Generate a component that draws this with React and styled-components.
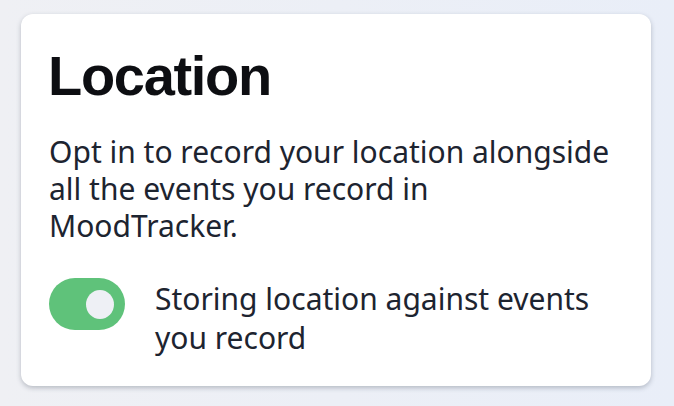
import React from "react";
import styled, { createGlobalStyle } from "styled-components";

const Global = createGlobalStyle`
  html, body { margin: 0; padding: 0; }
  body {
    width: 674px;
    height: 406px;
    overflow: hidden;
    background: linear-gradient(90deg, #eff0f4 0%, #e9eef8 100%);
    font-family: "Noto Sans", sans-serif;
  }
`;

const Page = styled.div`
  padding: 14px 23px 20px 21px;
`;

const Card = styled.section`
  background: #ffffff;
  border-radius: 12px;
  box-shadow: 0 2px 5px rgba(40, 50, 70, 0.28);
  padding: 30px 28px 22px 28px;
  height: 372px;
  box-sizing: border-box;
`;

const Title = styled.h1`
  margin: 0 0 0 -1px;
  font-family: "Liberation Sans", Arial, sans-serif;
  font-weight: 700;
  font-size: 56px;
  line-height: 64px;
  color: #0d0e12;
  letter-spacing: -1.3px;
`;

const Text = styled.p`
  margin: 25px 0 0;
  font-size: 30px;
  line-height: 37px;
  color: #1d2430;
`;

const Row = styled.div`
  display: flex;
  align-items: flex-start;
  gap: 30px;
  margin-top: 34px;
`;

const Toggle = styled.div`
  flex: none;
  width: 76px;
  height: 52px;
  border-radius: 26px;
  background: ${(p) => (p.$on ? "#5fc27a" : "#c9ced6")};
  display: flex;
  align-items: center;
  justify-content: ${(p) => (p.$on ? "flex-end" : "flex-start")};
  padding: 0 11px;
  box-sizing: border-box;
`;

const Knob = styled.span`
  width: 28px;
  height: 29px;
  border-radius: 50%;
  background: #eef0f5;
`;

const Label = styled.span`
  font-size: 30px;
  line-height: 39px;
  color: #1d2430;
  padding-top: 1px;
`;

export default function App() {
  return (
    <>
      <Global />
      <Page>
        <Card>
          <Title>Location</Title>
          <Text>
            Opt in to record your location alongside all the events you record in
            MoodTracker.
          </Text>
          <Row>
            <Toggle $on>
              <Knob />
            </Toggle>
            <Label>Storing location against events you record</Label>
          </Row>
        </Card>
      </Page>
    </>
  );
}
